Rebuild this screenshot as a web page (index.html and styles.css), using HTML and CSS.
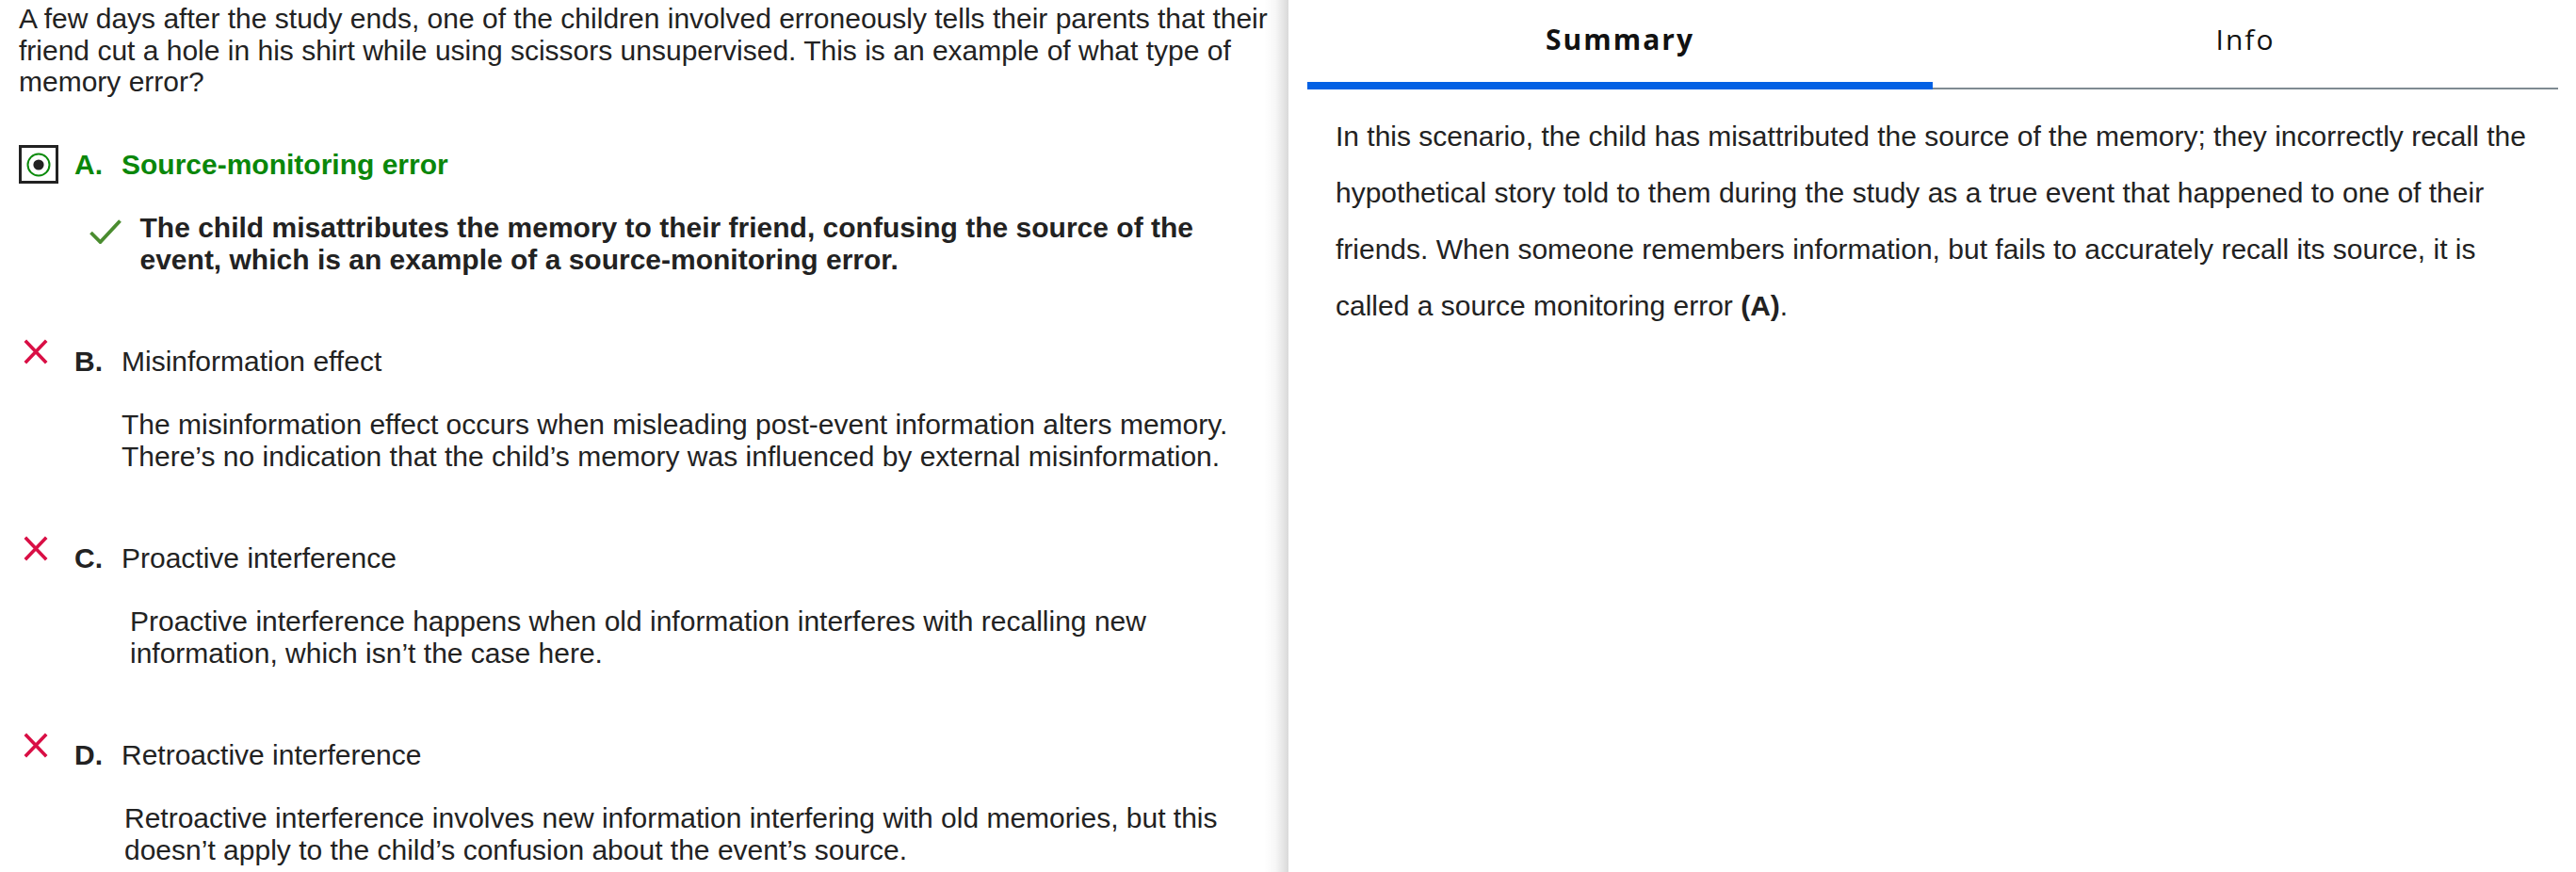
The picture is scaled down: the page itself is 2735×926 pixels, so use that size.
FILE: index.html
```html
<!DOCTYPE html>
<html lang="en">
<head>
<meta charset="utf-8">
<title>Question review</title>
<link rel="stylesheet" href="styles.css">
</head>
<body>
<div class="page">
  <main class="question-panel">
    <p class="question">A few days after the study ends, one of the children involved erroneously tells their parents that their friend cut a hole in his shirt while using scissors unsupervised. This is an example of what type of memory error?</p>

    <section class="opt opt-a correct">
      <div class="opt-head">
        <span class="mark">
          <span class="radio">
            <svg width="26" height="26" viewBox="0 0 26 26"><circle cx="13" cy="13" r="11.5" fill="none" stroke="#0a8a0a" stroke-width="2"/><circle cx="13" cy="13" r="5.6" fill="#222"/></svg>
          </span>
        </span>
        <span class="letter">A.</span>
        <span class="label">Source-monitoring error</span>
      </div>
      <div class="expl expl-a">
        <svg class="check" width="34" height="26" viewBox="0 0 34 26"><polyline points="1.5,14 11.5,24 32.5,1.5" fill="none" stroke="#4a8c2f" stroke-width="3.8"/></svg>
        <p>The child misattributes the memory to their friend, confusing the source of the event, which is an example of a source-monitoring error.</p>
      </div>
    </section>

    <section class="opt">
      <div class="opt-head">
        <span class="mark"><svg class="cross" width="26" height="27" viewBox="0 0 26 27"><path d="M1.8 1.8 L24.2 25.2 M24.2 1.8 L1.8 25.2" fill="none" stroke="#d90f45" stroke-width="3.6"/></svg></span>
        <span class="letter">B.</span>
        <span class="label">Misinformation effect</span>
      </div>
      <div class="expl expl-b">
        <p>The misinformation effect occurs when misleading post-event information alters memory. There’s no indication that the child’s memory was influenced by external misinformation.</p>
      </div>
    </section>

    <section class="opt">
      <div class="opt-head">
        <span class="mark"><svg class="cross" width="26" height="27" viewBox="0 0 26 27"><path d="M1.8 1.8 L24.2 25.2 M24.2 1.8 L1.8 25.2" fill="none" stroke="#d90f45" stroke-width="3.6"/></svg></span>
        <span class="letter">C.</span>
        <span class="label">Proactive interference</span>
      </div>
      <div class="expl expl-c">
        <p>Proactive interference happens when old information interferes with recalling new information, which isn’t the case here.</p>
      </div>
    </section>

    <section class="opt">
      <div class="opt-head">
        <span class="mark"><svg class="cross" width="26" height="27" viewBox="0 0 26 27"><path d="M1.8 1.8 L24.2 25.2 M24.2 1.8 L1.8 25.2" fill="none" stroke="#d90f45" stroke-width="3.6"/></svg></span>
        <span class="letter">D.</span>
        <span class="label">Retroactive interference</span>
      </div>
      <div class="expl expl-d">
        <p>Retroactive interference involves new information interfering with old memories, but this doesn’t apply to the child’s confusion about the event’s source.</p>
      </div>
    </section>
  </main>

  <aside class="summary-panel">
    <nav class="tabs">
      <div class="tab active">Summary</div>
      <div class="tab">Info</div>
    </nav>
    <p class="summary">In this scenario, the child has misattributed the source of the memory; they incorrectly recall the hypothetical story told to them during the study as a true event that happened to one of their friends. When someone remembers information, but fails to accurately recall its source, it is called a source monitoring error <b>(A)</b>.</p>
  </aside>
</div>
</body>
</html>
```

FILE: styles.css
```css
html, body {
  margin: 0;
  height: 926px;
  overflow: hidden;
  background: #fff;
}

body {
  font-family: "Liberation Sans", Arial, sans-serif;
  font-size: 30px;
  color: #222;
}

.page {
  display: grid;
  grid-template-columns: 1368px 1fr;
  height: 926px;
}

.question-panel {
  padding: 3px 20px 0 20px;
  overflow: hidden;
  background: linear-gradient(to right,
    rgba(0,0,0,0) calc(100% - 26px),
    rgba(0,0,0,0.03) calc(100% - 14px),
    rgba(0,0,0,0.15) 100%);
}

.question {
  margin: 0;
  line-height: 33.5px;
}

.opt {
  margin-top: 75px;
}

.opt-a {
  margin-top: 54.5px;
}

.opt-head {
  display: flex;
  align-items: flex-start;
  line-height: 33.5px;
}

.mark {
  flex: none;
  width: 59px;
  display: flex;
}

.radio {
  box-sizing: border-box;
  width: 42px;
  height: 41px;
  border: 3px solid #222;
  margin: -4px 0 -3.5px;
  display: flex;
  align-items: center;
  justify-content: center;
}

.radio svg {
  display: block;
}

.cross {
  display: block;
  margin: -7px 0 0 5px;
}

.letter {
  flex: none;
  width: 50px;
  font-weight: bold;
}

.correct .letter,
.correct .label {
  color: #0a870a;
  font-weight: bold;
}

.expl {
  margin-top: 33.5px;
  line-height: 33.5px;
}

.expl p {
  margin: 0;
}

.expl-a {
  display: flex;
  align-items: flex-start;
  padding-left: 75px;
}

.expl-a p {
  font-weight: bold;
}

.check {
  flex: none;
  display: block;
  margin: 8px 19.5px 0 0;
}

.expl-b { padding-left: 109px; }
.expl-c { padding-left: 118px; }
.expl-d { padding-left: 112px; }

.summary-panel {
  padding: 0 19px 0 20px;
}

.tabs {
  display: flex;
  border-bottom: 2px solid #7f8b92;
}

.tab {
  flex: 1;
  text-align: center;
  font-family: "Open Sans", sans-serif;
  font-size: 30px;
  line-height: 41px;
  letter-spacing: 2px;
  color: #111;
  padding: 21px 0 25px;
  border-bottom: 8px solid transparent;
  margin-bottom: -2px;
}

.tab.active {
  font-weight: 700;
  border-bottom-color: #0361e4;
}

.summary {
  margin: 20px 0 0;
  padding: 0 16px 0 30px;
  line-height: 60px;
}
```
